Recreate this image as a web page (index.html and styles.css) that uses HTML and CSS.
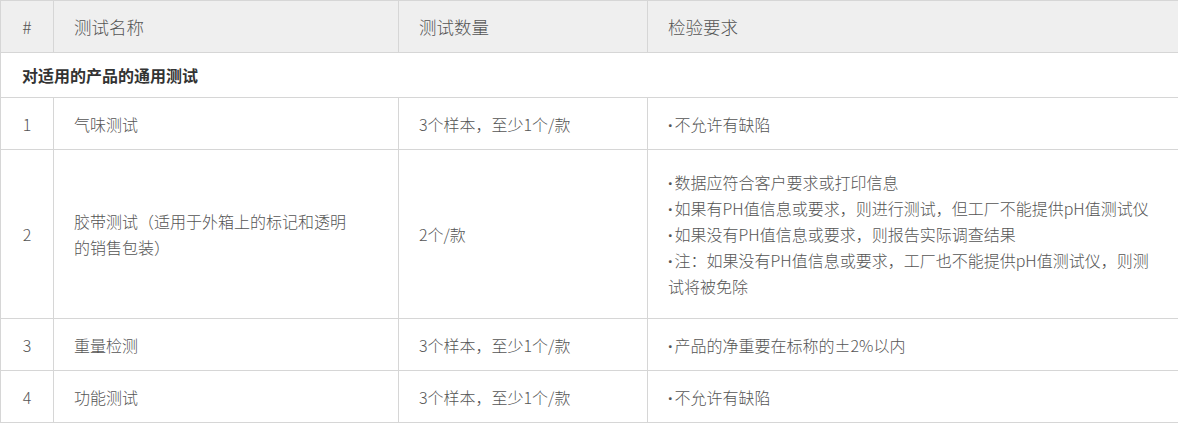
FILE: index.html
```html
<!DOCTYPE html>
<html lang="zh-CN">
<head>
<meta charset="utf-8">
<title>测试</title>
<link rel="stylesheet" href="styles.css">
</head>
<body>
<table class="spec">
  <colgroup>
    <col class="c-num">
    <col class="c-name">
    <col class="c-qty">
    <col class="c-req">
  </colgroup>
  <thead>
    <tr>
      <th class="num">#</th>
      <th>测试名称</th>
      <th>测试数量</th>
      <th>检验要求</th>
    </tr>
  </thead>
  <tbody>
    <tr class="section">
      <td colspan="4">对适用的产品的通用测试</td>
    </tr>
    <tr>
      <td class="num">1</td>
      <td class="name">气味测试</td>
      <td>3个样本，至少1个/款</td>
      <td class="req"><div><span class="dot">·</span>不允许有缺陷</div></td>
    </tr>
    <tr class="tall">
      <td class="num">2</td>
      <td class="name">胶带测试（适用于外箱上的标记和透明的销售包装）</td>
      <td>2个/款</td>
      <td class="req">
        <div><span class="dot">·</span>数据应符合客户要求或打印信息</div>
        <div><span class="dot">·</span>如果有PH值信息或要求，则进行测试，但工厂不能提供pH值测试仪</div>
        <div><span class="dot">·</span>如果没有PH值信息或要求，则报告实际调查结果</div>
        <div><span class="dot">·</span>注：如果没有PH值信息或要求，工厂也不能提供pH值测试仪，则测试将被免除</div>
      </td>
    </tr>
    <tr>
      <td class="num">3</td>
      <td class="name">重量检测</td>
      <td>3个样本，至少1个/款</td>
      <td class="req"><div><span class="dot">·</span>产品的净重要在标称的±2%以内</div></td>
    </tr>
    <tr>
      <td class="num">4</td>
      <td class="name">功能测试</td>
      <td>3个样本，至少1个/款</td>
      <td class="req"><div><span class="dot">·</span>不允许有缺陷</div></td>
    </tr>
  </tbody>
</table>
</body>
</html>
```

FILE: styles.css
```css
html, body {
  margin: 0;
  padding: 0;
  background: #ffffff;
}

body {
  font-family: "Noto Sans CJK SC", "Noto Sans", sans-serif;
  color: #555555;
}

.spec {
  width: 1178px;
  border-collapse: collapse;
  table-layout: fixed;
}

.c-num { width: 53px; }
.c-name { width: 345px; }
.c-qty { width: 249px; }
.c-req { width: 531px; }

.spec th,
.spec td {
  border: 1px solid #d6d6d6;
  text-align: left;
  vertical-align: middle;
  padding: 13px 20px 12px 20px;
  font-size: 16px;
  line-height: 26px;
  font-weight: 300;
}

.spec th {
  background: #efefef;
  font-size: 17.5px;
  color: #555555;
}

.spec .num {
  text-align: center;
  padding-left: 0;
  padding-right: 0;
}

.spec .name {
  padding-right: 50px;
}

.spec .req {
  padding-right: 18px;
}

.dot {
  font-family: "Noto Sans", "DejaVu Sans", sans-serif;
  font-weight: 700;
  line-height: 0;
  margin-right: 2px;
}

.spec .section td {
  padding: 9px 21px 9px 21px;
  font-weight: 700;
  color: #333333;
}

.tall td {
  padding-top: 19px;
  padding-bottom: 19px;
}
```
